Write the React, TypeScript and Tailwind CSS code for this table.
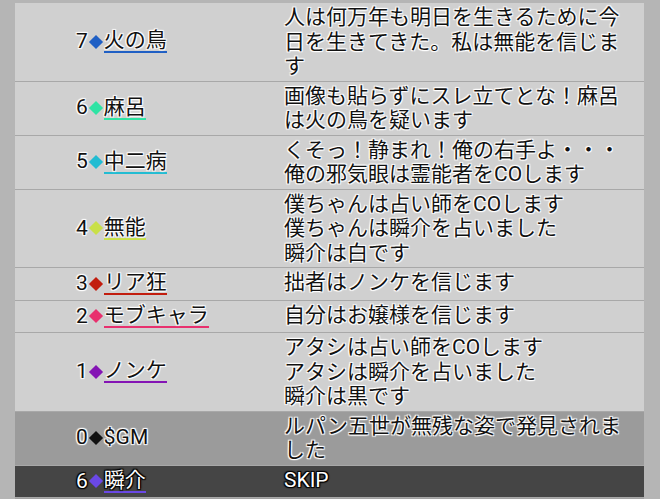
import React from 'react';

type Row = {
    no: number;
    name: string;
    color: string;
    line: string;
    text: string;
    rowBg: string;
    dark?: boolean;
};

const rows: Row[] = [
    { no: 7, name: '火の鳥', color: 'bg-[#1f5fc4]', line: 'border-[#1f5fc4]', text: '人は何万年も明日を生きるために今日を生きてきた。私は無能を信じます', rowBg: 'bg-[#d0d0d0]' },
    { no: 6, name: '麻呂', color: 'bg-[#2fe3a4]', line: 'border-[#2fe3a4]', text: '画像も貼らずにスレ立てとな！麻呂は火の鳥を疑います', rowBg: 'bg-[#d0d0d0]' },
    { no: 5, name: '中二病', color: 'bg-[#22bcd2]', line: 'border-[#22bcd2]', text: 'くそっ！静まれ！俺の右手よ・・・\n俺の邪気眼は霊能者をCOします', rowBg: 'bg-[#d0d0d0]' },
    { no: 4, name: '無能', color: 'bg-[#c9e048]', line: 'border-[#c9e048]', text: '僕ちゃんは占い師をCOします\n僕ちゃんは瞬介を占いました\n瞬介は白です', rowBg: 'bg-[#d0d0d0]' },
    { no: 3, name: 'リア狂', color: 'bg-[#c21d0e]', line: 'border-[#c21d0e]', text: '拙者はノンケを信じます', rowBg: 'bg-[#d0d0d0]' },
    { no: 2, name: 'モブキャラ', color: 'bg-[#e8306e]', line: 'border-[#e8306e]', text: '自分はお嬢様を信じます', rowBg: 'bg-[#d0d0d0]' },
    { no: 1, name: 'ノンケ', color: 'bg-[#8414b4]', line: 'border-[#8414b4]', text: 'アタシは占い師をCOします\nアタシは瞬介を占いました\n瞬介は黒です', rowBg: 'bg-[#d0d0d0]' },
    { no: 0, name: '$GM', color: 'bg-[#111111]', line: 'border-transparent', text: 'ルパン五世が無残な姿で発見されました', rowBg: 'bg-[#9b9b9b]' },
    { no: 6, name: '瞬介', color: 'bg-[#6a48e6]', line: 'border-[#6a48e6]', text: 'SKIP', rowBg: 'bg-[#454545]', dark: true },
];

// halo round the text, like the game's outlined labels
const lightText = 'text-[#111] [text-shadow:-1px_-1px_1px_#fff,1px_-1px_1px_#fff,-1px_1px_1px_#fff,1px_1px_1px_#fff,0_0_2px_#fff]';
const darkText = 'text-white [text-shadow:-1px_-1px_1px_#000,1px_-1px_1px_#000,-1px_1px_1px_#000,1px_1px_1px_#000,0_0_2px_#000]';

const LogRow: React.FC<{ row: Row }> = ({ row }) => {
    const textCls = row.dark ? darkText : lightText;
    return (
        <div className={`grid grid-cols-[269px_1fr] border-b border-[#a8a8a8] ${row.rowBg}`}>
            <div className={`flex items-center pl-[61px] ${textCls}`}>
                <span>{row.no}</span>
                <span className={`inline-block w-[10px] h-[10px] rotate-45 mx-[3px] ${row.color}`} />
                <span className={`inline-block leading-[21px] border-b-2 ${row.line}`}>{row.name}</span>
            </div>
            <div className={`py-[2px] pr-[15px] leading-[24.5px] whitespace-pre-line ${textCls}`}>
                {row.text}
            </div>
        </div>
    );
};

const App: React.FC = () => {
    return (
        <div className="w-[660px] h-[499px] overflow-hidden bg-[#b5b5b5] pl-[15px] pr-[16px] pt-[3px] font-['Roboto','Noto_Sans_CJK_JP',sans-serif] text-[21px]">
            <div className="bg-[#888888]">
                {rows.map((r, i) => (
                    <LogRow key={i} row={r} />
                ))}
                <div className="h-[20px] border-t border-[#a0a0a0]" />
            </div>
        </div>
    );
};

export default App;
